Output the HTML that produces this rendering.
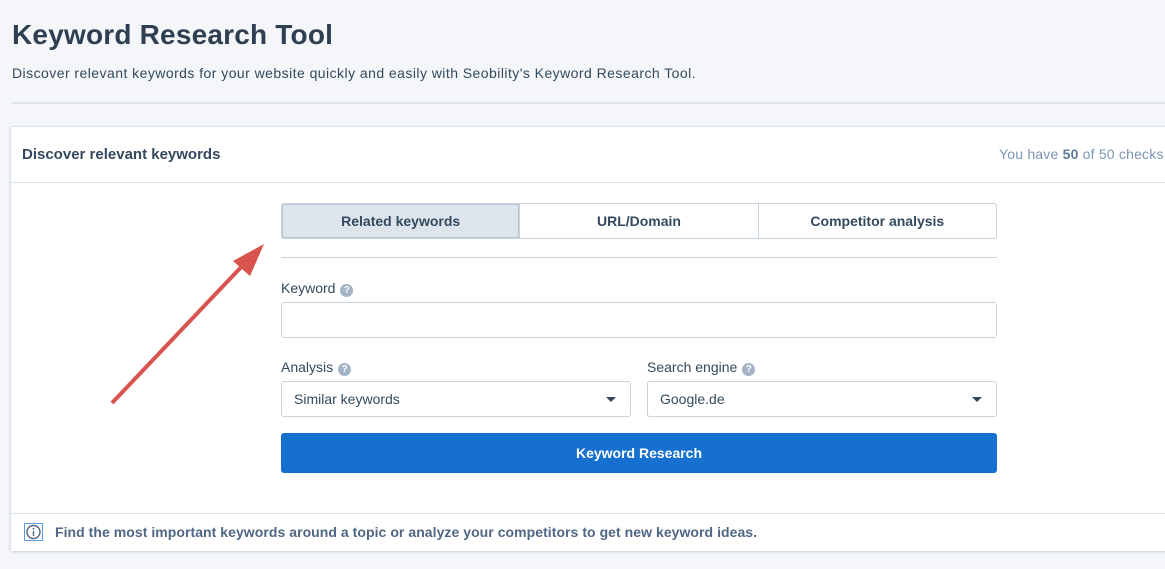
<!DOCTYPE html>
<html><head><meta charset="utf-8"><style>
*{box-sizing:border-box;margin:0;padding:0}
body{width:1165px;height:569px;overflow:hidden;background:#f4f6f9;font-family:"Liberation Sans",sans-serif;color:#34495e;position:relative}
h1{position:absolute;left:12px;top:19px;font-size:28px;font-weight:bold;color:#2f3f52;letter-spacing:0.2px}
.sub{position:absolute;left:12px;top:65px;font-size:14px;color:#34495e;letter-spacing:0.45px}
.hr{position:absolute;left:12px;top:102px;width:1160px;height:2px;background:#dbe2ea}
.card{position:absolute;left:10px;top:126px;width:1170px;height:425px;background:#fff;border:1px solid #dbe2ea;border-radius:3px;box-shadow:0 1px 2px #c8d1dc}
.head{height:56px;border-bottom:1px solid #dbe2ea;position:relative}
.head b{position:absolute;left:11px;top:19px;font-size:15px;color:#34495e}
.head span{position:absolute;left:988px;top:19px;font-size:14px;color:#7a95b5;letter-spacing:0.2px}
.head span b{position:static;color:#5e7896;font-size:14px}
.tabs{position:absolute;left:270px;top:76px;width:716px;height:36px;display:flex;border:1px solid #c9d3de;border-radius:3px}
.tabs div{flex:1;text-align:center;line-height:34px;font-size:14px;font-weight:bold;color:#34495e;border-left:1px solid #c9d3de}
.tabs div:first-child{border-left:none;background:#dde4ec;box-shadow:inset 0 0 0 1px #b9c5d2}
.sep{position:absolute;left:270px;top:130px;width:716px;height:1px;background:#c9d3de}
.lbl{position:absolute;font-size:14px;color:#34495e}
.q{display:inline-block;width:13px;height:13px;border-radius:50%;background:#a3b4c6;color:#fff;font-size:10px;font-weight:bold;text-align:center;line-height:13px;margin-left:5px;vertical-align:0}
.inp{position:absolute;height:36px;border:1px solid #c9d3de;border-radius:3px;font-size:14px;line-height:34px;padding-left:12px;color:#34495e}
.car{position:absolute;right:14px;top:15px;border-left:5px solid transparent;border-right:5px solid transparent;border-top:5px solid #34495e}
.btn{position:absolute;left:270px;top:306px;width:716px;height:40px;background:#1570cf;border-radius:3px;color:#fff;font-weight:bold;font-size:14px;text-align:center;line-height:40px}
.foot{position:absolute;left:0;top:386px;width:100%;height:38px;border-top:1px solid #dbe2ea;background:#fff}
.foot .i{position:absolute;left:13px;top:9px;width:19px;height:18px;border:1px solid #5b9be0}
.foot b{position:absolute;left:44px;top:10px;font-size:14px;color:#4f6785;letter-spacing:0.05px}
</style></head><body>
<h1>Keyword Research Tool</h1>
<div class="sub">Discover relevant keywords for your website quickly and easily with Seobility's Keyword Research Tool.</div>
<div class="hr"></div>
<div class="card">
<div class="head"><b>Discover relevant keywords</b><span>You have <b>50</b> of 50 checks</span></div>
<div class="tabs"><div>Related keywords</div><div>URL/Domain</div><div>Competitor analysis</div></div>
<div class="sep"></div>
<div class="lbl" style="left:270px;top:153px">Keyword<span class="q">?</span></div>
<div class="inp" style="left:270px;top:175px;width:716px"></div>
<div class="lbl" style="left:270px;top:232px">Analysis<span class="q">?</span></div>
<div class="inp" style="left:270px;top:254px;width:350px">Similar keywords<span class="car"></span></div>
<div class="lbl" style="left:636px;top:232px">Search engine<span class="q">?</span></div>
<div class="inp" style="left:636px;top:254px;width:350px">Google.de<span class="car"></span></div>
<div class="btn">Keyword Research</div>
<div class="foot"><div class="i"><svg width="17" height="16" viewBox="0 0 17 16"><circle cx="8.5" cy="8" r="6.5" fill="none" stroke="#4f6785" stroke-width="1.4"/><rect x="7.8" y="7" width="1.4" height="5" fill="#4f6785"/><circle cx="8.5" cy="4.8" r="0.9" fill="#4f6785"/></svg></div><b>Find the most important keywords around a topic or analyze your competitors to get new keyword ideas.</b></div>
</div>
<svg style="position:absolute;left:0;top:0" width="1165" height="569"><line x1="112" y1="403" x2="245" y2="263" stroke="#d9534f" stroke-width="4"/><polygon points="264,244 233,261 250,276" fill="#d9534f"/></svg>
</body></html>
